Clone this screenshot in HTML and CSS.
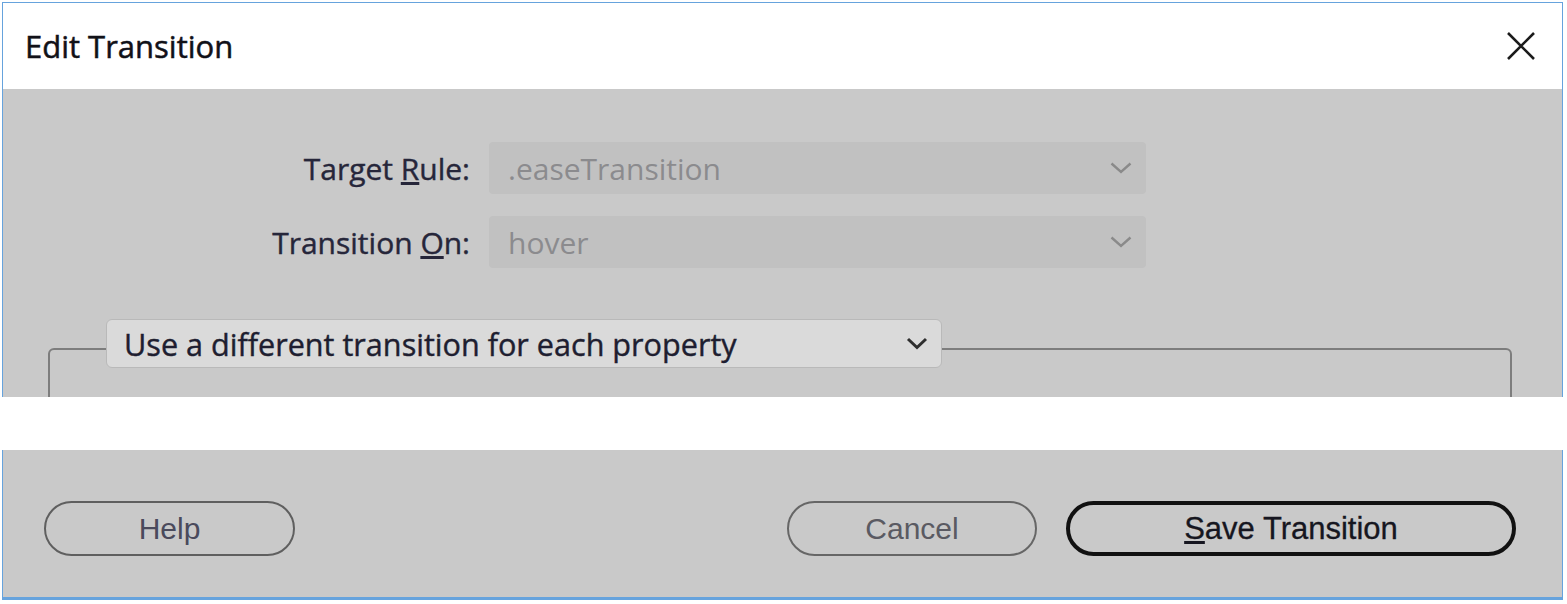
FILE: index.html
```html
<!DOCTYPE html>
<html lang="en">
<head>
<meta charset="utf-8">
<title>Edit Transition</title>
<link rel="stylesheet" href="styles.css">
</head>
<body>
<div class="window">
  <div class="upper">
    <header class="titlebar">
      <h1 class="title">Edit Transition</h1>
      <button class="close" aria-label="Close">
        <svg width="30" height="30" viewBox="0 0 30 30"><path d="M2 2 L28 28 M28 2 L2 28" stroke="#1b1b1b" stroke-width="2.6" fill="none"/></svg>
      </button>
    </header>
    <main class="content">
      <div class="form">
        <div class="row">
          <label class="label">Target <u>R</u>ule:</label>
          <div class="select"><span>.easeTransition</span>
            <svg class="chev" width="22" height="12" viewBox="0 0 22 12"><path d="M1.5 1.5 L11 10 L20.5 1.5" stroke="#8a8a8a" stroke-width="2.4" fill="none"/></svg>
          </div>
        </div>
        <div class="row">
          <label class="label">Transition <u>O</u>n:</label>
          <div class="select"><span>hover</span>
            <svg class="chev" width="22" height="12" viewBox="0 0 22 12"><path d="M1.5 1.5 L11 10 L20.5 1.5" stroke="#8a8a8a" stroke-width="2.4" fill="none"/></svg>
          </div>
        </div>
      </div>
      <div class="group">
        <div class="combo"><span>Use a different transition for each property</span>
          <svg class="chev" width="22" height="13" viewBox="0 0 22 13"><path d="M2 2 L11 10.5 L20 2" stroke="#2e2e2e" stroke-width="3" fill="none"/></svg>
        </div>
      </div>
    </main>
  </div>
  <div class="gap"></div>
  <footer class="lower">
    <button class="btn btn-help">Help</button>
    <button class="btn btn-cancel">Cancel</button>
    <button class="btn btn-save"><u>S</u>ave Transition</button>
  </footer>
</div>
</body>
</html>
```

FILE: styles.css
```css
* { box-sizing: border-box; }
body {
  margin: 0;
  background: #ffffff;
  font-family: "Open Sans", "Noto Sans", sans-serif;
}
.window {
  margin: 2px 0 0 2px;
  width: 1561px;
}
.upper {
  border: 1px solid #66a3dd;
  border-bottom: none;
}
.titlebar {
  height: 86px;
  background: #ffffff;
  display: flex;
  align-items: center;
  justify-content: space-between;
  padding: 0 26px 0 22px;
}
.title {
  margin: 0;
  font-weight: 400;
  font-size: 31px;
  color: #111118;
  -webkit-text-stroke: 0.5px #111118;
}
.close {
  border: 0;
  background: transparent;
  padding: 0;
  width: 30px;
  height: 30px;
  display: flex;
}
.content {
  height: 308px;
  background: #c9c9c9;
  overflow: hidden;
  padding-top: 53px;
}
.form {
  display: flex;
  flex-direction: column;
  gap: 22px;
}
.row {
  display: flex;
  align-items: center;
  gap: 19px;
  height: 52px;
}
.label {
  width: 467px;
  text-align: right;
  font-size: 30px;
  color: #26263a;
  -webkit-text-stroke: 0.4px #26263a;
}
.select {
  width: 657px;
  height: 52px;
  background: #c1c1c1;
  border-radius: 4px;
  display: flex;
  align-items: center;
  justify-content: space-between;
  padding: 0 14px 0 19px;
  font-size: 30px;
  color: #8b8b8e;
}
.group {
  margin: 80px 0 0 45px;
  width: 1464px;
  height: 200px;
  border: 2px solid #7d7d7d;
  border-radius: 6px;
}
.combo {
  margin: -31px 0 0 56px;
  width: 836px;
  height: 49px;
  background: #dadada;
  border: 1px solid #b9b9b9;
  border-radius: 6px;
  display: flex;
  align-items: center;
  justify-content: space-between;
  padding: 0 13px 0 17px;
  font-size: 30.6px;
  color: #1e1e30;
  -webkit-text-stroke: 0.4px #1e1e30;
}
.gap {
  height: 53px;
  background: #ffffff;
}
.lower {
  height: 150px;
  background: #c9c9c9;
  border: 1px solid #66a3dd;
  border-top: none;
  border-bottom-width: 3px;
  display: flex;
  align-items: flex-start;
  gap: 29px;
  padding: 51px 46px 0 41px;
}
.btn {
  height: 55px;
  border-radius: 28px;
  background: transparent;
  font-family: "Liberation Sans", Arial, sans-serif;
  font-size: 30px;
  display: flex;
  align-items: center;
  justify-content: center;
  padding: 0;
}
.btn-help {
  width: 251px;
  border: 2px solid #5f5f5f;
  color: #4a4a5c;
}
.btn-cancel {
  width: 250px;
  margin-left: auto;
  border: 2px solid #666666;
  color: #5a5a62;
}
.btn-save {
  width: 450px;
  border: 4px solid #111111;
  color: #161620;
  font-size: 31px;
  -webkit-text-stroke: 0.3px #161620;
}
```
